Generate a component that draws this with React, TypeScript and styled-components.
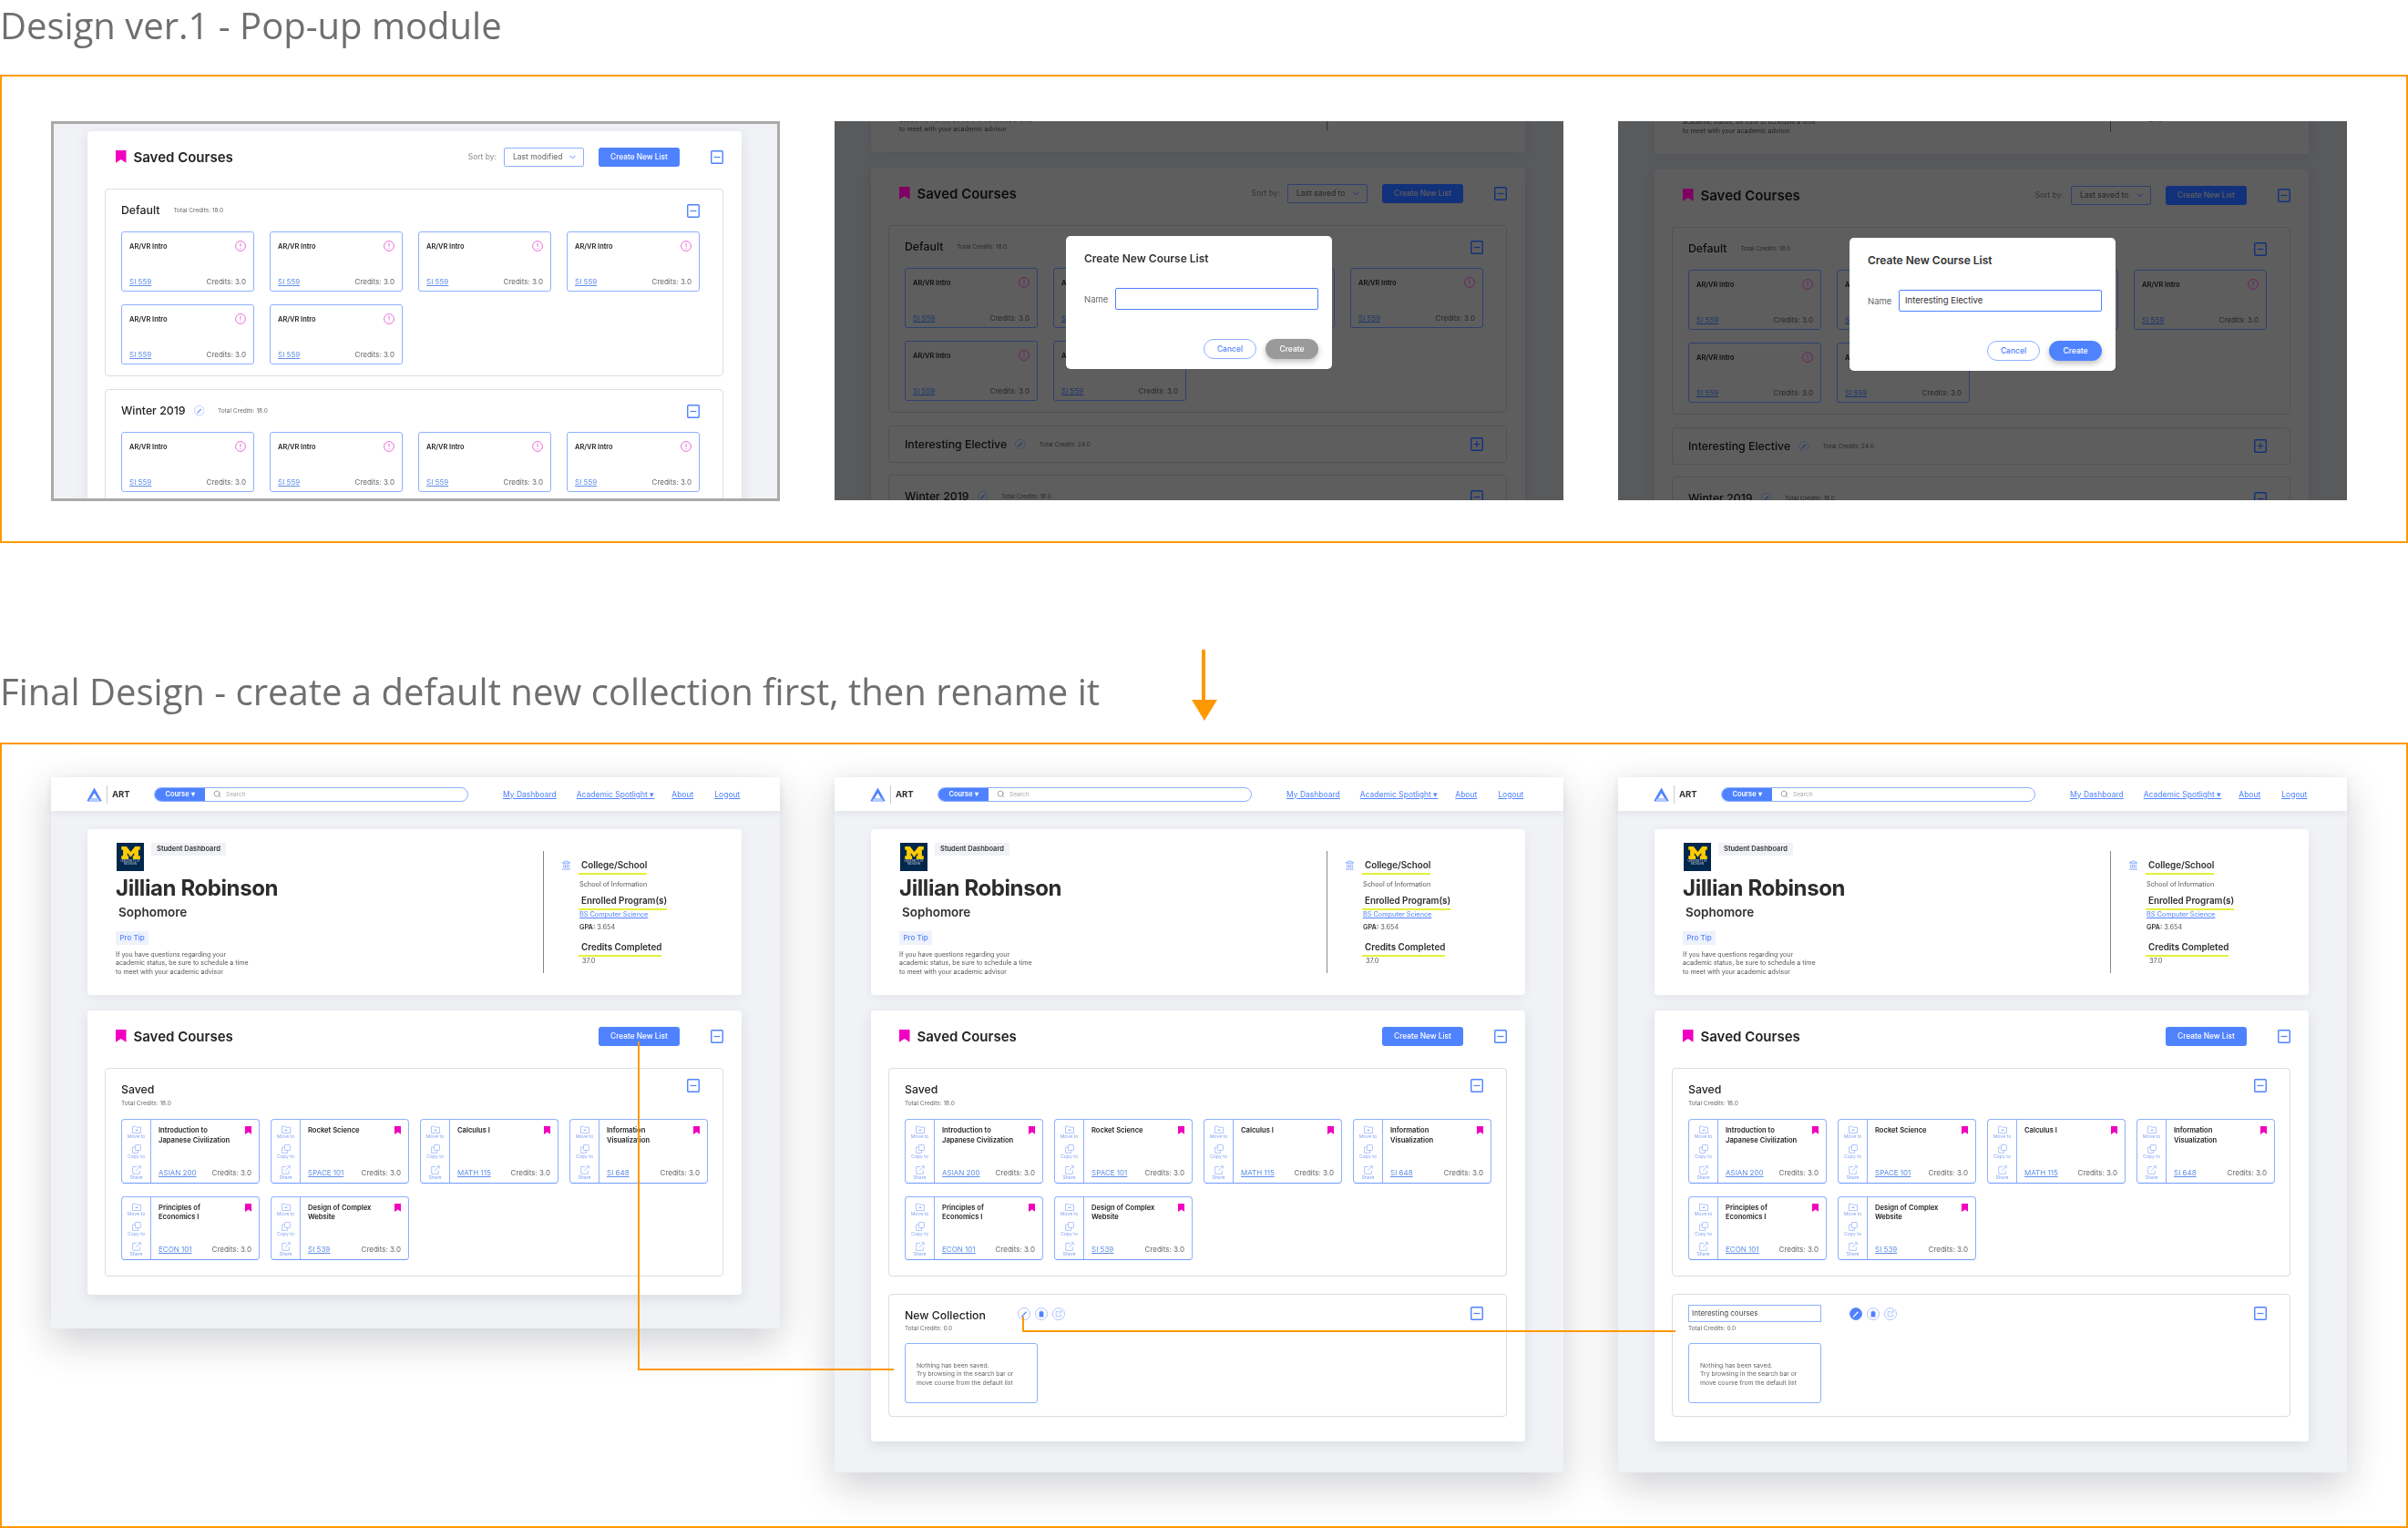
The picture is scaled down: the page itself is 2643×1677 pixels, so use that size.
import React from 'react';
import styled, { createGlobalStyle } from 'styled-components';
import { ChevronDown, Landmark, Search } from 'lucide-react';

const BLUE = '#4f82ff';
const LINE_BLUE = '#8fb0ff';
const PINK = '#f000c0';

const GlobalStyle = createGlobalStyle`
  html, body {
    margin: 0;
    padding: 0;
    background: #fff;
  }
  * {
    box-sizing: border-box;
  }
`;

// small drawn icons
const Bookmark = ({ size = 12 }: { size?: number }) => (
  <svg width={size} height={size * 1.2} viewBox="0 0 10 12">
    <path d="M0 0H10V12L5 8.8L0 12Z" fill={PINK} />
  </svg>
);

const FolderIcon = () => (
  <svg width="10" height="9" viewBox="0 0 10 9" fill="none" stroke="#9db8ff" strokeWidth="0.8">
    <path d="M.5 1.2H3.6L4.6 2.2H9.5V8.5H.5Z" />
    <path d="M3.6 5.3H6.4" stroke={BLUE} />
  </svg>
);

const CopyIcon = () => (
  <svg width="10" height="10" viewBox="0 0 10 10" fill="none" stroke="#9db8ff" strokeWidth="0.8">
    <rect x="3.4" y=".5" width="6" height="6" rx=".6" />
    <path d="M3.4 3H.6V9.4H6.6V6.5" />
  </svg>
);

const ShareIcon = () => (
  <svg width="10" height="10" viewBox="0 0 10 10" fill="none" stroke="#9db8ff" strokeWidth="0.8">
    <path d="M5 1.5H.7V9.3H8.3V5.5" />
    <path d="M4.2 5.8L9 1M6.4.7H9.3V3.6" />
  </svg>
);

const InfoIcon = () => (
  <svg width="12" height="12" viewBox="0 0 12 12" fill="none" stroke="#e85fd4" strokeWidth="0.9">
    <circle cx="6" cy="6" r="5.4" />
    <path d="M6 2.8V6.8M6 8.2V9.2" />
  </svg>
);

const PencilMark = ({ color }: { color: string }) => (
  <path d="M4.4 9.6L9 4.6L9.6 5.2L5 10.2L4.2 10.4Z" fill={color} stroke={color} strokeWidth="0.5" />
);

const EditCircle = ({ filled = false, size = 14 }: { filled?: boolean; size?: number }) => (
  <svg width={size} height={size} viewBox="0 0 14 14">
    <circle cx="7" cy="7" r="6.5" fill={filled ? BLUE : '#fff'} stroke={filled ? BLUE : '#9db8ff'} strokeWidth="0.8" />
    <PencilMark color={filled ? '#fff' : BLUE} />
  </svg>
);

const TrashCircle = () => (
  <svg width="14" height="14" viewBox="0 0 14 14">
    <circle cx="7" cy="7" r="6.5" fill="#fff" stroke="#9db8ff" strokeWidth="0.8" />
    <path d="M4.6 4.6H9.4V10.4H4.6Z" fill={BLUE} />
    <path d="M5.8 3.6H8.2V4.6H5.8Z" fill={BLUE} />
  </svg>
);

const ShareCircle = () => (
  <svg width="14" height="14" viewBox="0 0 14 14" fill="none" stroke="#9db8ff" strokeWidth="0.8">
    <circle cx="7" cy="7" r="6.5" />
    <path d="M7 4.4H4.2V9.8H9.6V7.4M6.8 7.2L10 4M8.2 3.8H10.2V5.8" />
  </svg>
);

const ArtLogo = () => (
  <svg width="17" height="16" viewBox="0 0 17 16">
    <path d="M8.5 .5L16.2 14.2Q16.4 15.6 15 15.6H2Q.6 15.6 .8 14.2Z" fill={BLUE} />
    <path d="M8.5 6.2L12.4 12.6H4.6Z" fill="#fff" />
    <path d="M3.6 12.6H13.4L14.6 15.6H2.4Z" fill="#b9ccff" />
  </svg>
);

const Michigan = () => (
  <MichiganBox>
    <svg width="21" height="14" viewBox="0 0 22 15">
      <path
        d="M0 0H6L11 6.5L16 0H22V4H20V11H22V15H13.5V11H15V7.5L11 12.5L7 7.5V11H8.5V15H0V11H2V4H0Z"
        fill="#ffcb05"
      />
    </svg>
    <MichiganText>
      UNIVERSITY OF
      <br />
      MICHIGAN
    </MichiganText>
  </MichiganBox>
);

const MinusBox = ({ plus = false }: { plus?: boolean }) => (
  <svg width="14" height="15" viewBox="0 0 14 15" fill="none">
    <rect x=".75" y=".75" width="12.5" height="13.5" rx="1" fill="#fff" stroke={BLUE} strokeWidth="1.4" />
    <path d={plus ? 'M3.5 7.5H10.5M7 4V11' : 'M3.5 7.5H10.5'} stroke={BLUE} strokeWidth="1.2" />
  </svg>
);

const savedCourses = [
  { title: 'Introduction to\nJapanese Civilization', code: 'ASIAN 200' },
  { title: 'Rocket Science', code: 'SPACE 101' },
  { title: 'Calculus I', code: 'MATH 115' },
  { title: 'Information\nVisualization', code: 'SI 648' },
  { title: 'Principles of\nEconomics I', code: 'ECON 101' },
  { title: 'Design of Complex\nWebsite', code: 'SI 539' },
];

const OldCard = () => (
  <OldCourse>
    <OldTop>
      <OldTitle>AR/VR Intro</OldTitle>
      <InfoIcon />
    </OldTop>
    <CourseFooter>
      <CourseCode>SI 559</CourseCode>
      <Credits>Credits: 3.0</Credits>
    </CourseFooter>
  </OldCourse>
);

const SavedHeader = ({ sort }: { sort?: string }) => (
  <Header>
    <HeaderTitle>
      <Bookmark size={11.5} />
      <span>Saved Courses</span>
    </HeaderTitle>
    <HeaderActions>
      {sort && (
        <>
          <SortLabel>Sort by:</SortLabel>
          <SortSelect>
            {sort}
            <ChevronDown size={11} color={BLUE} />
          </SortSelect>
        </>
      )}
      <CreateButton>Create New List</CreateButton>
    </HeaderActions>
    <MinusBox />
  </Header>
);

const OldListHead = ({
  name,
  credits,
  edit = false,
  plus = false,
  height = 46,
}: {
  name: string;
  credits: string;
  edit?: boolean;
  plus?: boolean;
  height?: number;
}) => (
  <OldHead $height={height}>
    <ListName>{name}</ListName>
    {edit && <EditCircle size={11.5} />}
    <OldTotal>Total Credits: {credits}</OldTotal>
    <HeadEnd>
      <MinusBox plus={plus} />
    </HeadEnd>
  </OldHead>
);

const OldDefaultList = ({ count = 6 }: { count?: number }) => (
  <OldList>
    <OldListHead name="Default" credits="18.0" />
    <OldGrid>
      {Array.from({ length: count }).map((_, i) => (
        <OldCard key={i} />
      ))}
    </OldGrid>
  </OldList>
);

const StudentCard = ({ $offset }: { $offset?: number }) => (
  <Student $offset={$offset}>
    <StudentLeft>
      <BadgeRow>
        <Michigan />
        <DashboardTag>Student Dashboard</DashboardTag>
      </BadgeRow>
      <StudentName>Jillian Robinson</StudentName>
      <StudentYear>Sophomore</StudentYear>
      <ProTip>Pro Tip</ProTip>
      <TipText>
        If you have questions regarding your
        <br />
        academic status, be sure to schedule a time
        <br />
        to meet with your academic advisor
      </TipText>
    </StudentLeft>
    <Facts>
      <FactHeadRow>
        <TempleSlot>
          <Landmark size={11} color={BLUE} strokeWidth={1.5} />
        </TempleSlot>
        <FactHead>College/School</FactHead>
      </FactHeadRow>
      <FactText $top={6}>School of Information</FactText>
      <FactHeadRow $top={7}>
        <FactHead>Enrolled Program(s)</FactHead>
      </FactHeadRow>
      <FactLink>BS Computer Science</FactLink>
      <FactText $top={4}>
        <b>GPA:</b> 3.654
      </FactText>
      <FactHeadRow $top={11}>
        <FactHead>Credits Completed</FactHead>
      </FactHeadRow>
      <FactText $indent={3}>37.0</FactText>
    </Facts>
  </Student>
);

const SavedList = () => (
  <NewList $height={229}>
    <NewHead>
      <div>
        <ListName>Saved</ListName>
        <NewTotal>Total Credits: 18.0</NewTotal>
      </div>
      <MinusBox />
    </NewHead>
    <NewGrid>
      {savedCourses.map((course) => (
        <NewCourse key={course.code}>
          <ToolColumn>
            <ToolItem>
              <FolderIcon />
              Move to
            </ToolItem>
            <ToolItem>
              <CopyIcon />
              Copy to
            </ToolItem>
            <ToolItem>
              <ShareIcon />
              Share
            </ToolItem>
          </ToolColumn>
          <NewBody>
            <NewTop>
              <NewTitle>{course.title}</NewTitle>
              <Bookmark size={7.5} />
            </NewTop>
            <CourseFooter>
              <CourseCode>{course.code}</CourseCode>
              <Credits>Credits: 3.0</Credits>
            </CourseFooter>
          </NewBody>
        </NewCourse>
      ))}
    </NewGrid>
  </NewList>
);

const CollectionList = ({ editing = false }: { editing?: boolean }) => (
  <NewList $height={135} $top={19}>
    <CollectionHead>
      <CollectionName $width={editing ? 177 : 124}>
        {editing ? <RenameInput>Interesting courses</RenameInput> : <ListName>New Collection</ListName>}
      </CollectionName>
      <CircleRow>
        <EditCircle filled={editing} />
        <TrashCircle />
        <ShareCircle />
      </CircleRow>
      <HeadEnd>
        <MinusBox />
      </HeadEnd>
    </CollectionHead>
    <NewTotal>Total Credits: 0.0</NewTotal>
    <EmptyBox>
      Nothing has been saved.
      <br />
      Try browsing in the search bar or
      <br />
      move course from the default list
    </EmptyBox>
  </NewList>
);

const FinalPanel = ({ tall = false, editing = false }: { tall?: boolean; editing?: boolean }) => (
  <Panel $height={tall ? 763 : 605} $shadow>
    <Nav>
      <ArtLogo />
      <NavDivider />
      <NavBrand>ART</NavBrand>
      <SearchBar>
        <CoursePill>Course ▾</CoursePill>
        <Search size={9} color="#888" />
        <SearchHint>Search</SearchHint>
      </SearchBar>
      <NavLinks>
        <NavLink $gap={22}>My Dashboard</NavLink>
        <NavLink $gap={19}>Academic Spotlight ▾</NavLink>
        <NavLink $gap={23}>About</NavLink>
        <NavLink>Logout</NavLink>
      </NavLinks>
    </Nav>
    <StudentCard $offset={20} />
    <SavedCard $bottom={tall ? 27 : 20}>
      <SavedHeader />
      <SavedList />
      {tall && <CollectionList editing={editing} />}
    </SavedCard>
  </Panel>
);

const DimmedPanel = ({ filled = false }: { filled?: boolean }) => (
  <Panel $height={416}>
    <StudentCard $offset={filled ? -146 : -148} />
    <SavedCard>
      <SavedHeader sort="Last saved to" />
      <OldDefaultList />
      <OldList $top={14}>
        <OldListHead name="Interesting Elective" credits="24.0" edit plus height={39} />
      </OldList>
      <OldList $top={13}>
        <OldListHead name="Winter 2019" credits="18.0" edit />
      </OldList>
    </SavedCard>
    <Overlay $shift={filled ? 14 : 18}>
      <Modal>
        <ModalTitle>Create New Course List</ModalTitle>
        <NameRow>
          <NameLabel>Name</NameLabel>
          <NameInput>{filled ? 'Interesting Elective' : ''}</NameInput>
        </NameRow>
        <ModalButtons>
          <CancelButton>Cancel</CancelButton>
          <ConfirmButton $ready={filled}>Create</ConfirmButton>
        </ModalButtons>
      </Modal>
    </Overlay>
  </Panel>
);

export default function App() {
  return (
    <Page>
      <GlobalStyle />
      <TopHeading>Design ver.1 - Pop-up module</TopHeading>
      <Frame $height={514} $top={49}>
        <Panel $height={417} $framed>
          <SavedCard $top={11}>
            <SavedHeader sort="Last modified" />
            <OldDefaultList />
            <OldList $top={14}>
              <OldListHead name="Winter 2019" credits="18.0" edit />
              <OldGrid>
                {[0, 1, 2, 3].map((i) => (
                  <OldCard key={i} />
                ))}
              </OldGrid>
            </OldList>
          </SavedCard>
        </Panel>
        <DimmedPanel />
        <DimmedPanel filled />
      </Frame>
      <MiddleRow>
        <FinalHeading>Final Design - create a default new collection first, then rename it</FinalHeading>
        <DownArrow viewBox="0 0 28 78">
          <path d="M11 0H15V55H28L14 78L0 55H11Z" fill="#ff9800" />
        </DownArrow>
      </MiddleRow>
      <Frame $height={862} $top={36}>
        <FinalPanel />
        <FinalPanel tall />
        <FinalPanel tall editing />
      </Frame>
      <Connectors viewBox="0 0 2643 1677">
        <polyline points="701,1143 701,1503 981,1503" />
        <polyline points="1123,1445 1123,1461 1839,1461" />
      </Connectors>
    </Page>
  );
}

const Page = styled.div`
  position: relative;
  width: 2643px;
  height: 1677px;
  overflow: hidden;
  font-family: Inter, 'Liberation Sans', sans-serif;
  color: #222;
`;

const TopHeading = styled.h1`
  margin: 0;
  height: 82px;
  padding-top: 2px;
  font-family: 'Open Sans', sans-serif;
  font-weight: 400;
  font-size: 40px;
  line-height: 52px;
  color: #6f6f6f;
`;

const Frame = styled.section<{ $height: number; $top: number }>`
  display: flex;
  gap: 60px;
  align-items: flex-start;
  height: ${(p) => p.$height}px;
  padding: ${(p) => p.$top}px 0 0 54px;
  border: 2px solid #ff9800;
`;

const MiddleRow = styled.div`
  display: grid;
  grid-template-columns: 1308px 28px;
  height: 219px;
`;

const FinalHeading = styled.h2`
  margin: 135px 0 0;
  font-family: 'Open Sans', sans-serif;
  font-weight: 400;
  font-size: 40px;
  line-height: 56px;
  color: #6f6f6f;
  white-space: nowrap;
`;

const DownArrow = styled.svg`
  margin-top: 117px;
  width: 28px;
  height: 78px;
`;

const Connectors = styled.svg`
  position: absolute;
  left: 0;
  top: 0;
  width: 2643px;
  height: 1677px;
  pointer-events: none;
  polyline {
    fill: none;
    stroke: #ff9800;
    stroke-width: 2;
  }
`;

const Panel = styled.div<{ $height: number; $framed?: boolean; $shadow?: boolean }>`
  position: relative;
  flex: none;
  width: 800px;
  height: ${(p) => p.$height}px;
  background: #f0f2f6;
  overflow: ${(p) => (p.$shadow ? 'visible' : 'hidden')};
  box-shadow: ${(p) => (p.$shadow ? '0 14px 40px rgba(30, 35, 50, 0.22)' : 'none')};
  outline: ${(p) => (p.$framed ? '3px solid #aaaaaa' : 'none')};
  outline-offset: -3px;
`;

const Overlay = styled.div<{ $shift: number }>`
  position: absolute;
  inset: 0;
  display: flex;
  align-items: center;
  justify-content: center;
  padding-bottom: ${(p) => p.$shift}px;
  backdrop-filter: brightness(0.37) saturate(1.6);
`;

const Modal = styled.div`
  width: 292px;
  height: 146px;
  padding: 18px 15px 0 20px;
  background: #fff;
  border-radius: 5px;
`;

const ModalTitle = styled.div`
  font-size: 12px;
  line-height: 14px;
  font-weight: 600;
  color: #333;
`;

const NameRow = styled.div`
  display: flex;
  align-items: center;
  margin-top: 25px;
`;

const NameLabel = styled.span`
  width: 34px;
  font-size: 9.5px;
  color: #666;
`;

const NameInput = styled.div`
  flex: 1;
  height: 24px;
  padding-left: 6px;
  border: 1px solid ${BLUE};
  border-radius: 2px;
  font-size: 9.5px;
  line-height: 22px;
  color: #333;
`;

const ModalButtons = styled.div`
  display: flex;
  justify-content: flex-end;
  gap: 10px;
  margin-top: 32px;
`;

const CancelButton = styled.div`
  width: 58px;
  height: 22px;
  border: 1px solid ${LINE_BLUE};
  border-radius: 11px;
  text-align: center;
  font-size: 8.5px;
  line-height: 20px;
  font-weight: 500;
  color: ${BLUE};
`;

const ConfirmButton = styled.div<{ $ready?: boolean }>`
  width: 58px;
  height: 22px;
  border-radius: 11px;
  background: ${(p) => (p.$ready ? BLUE : '#9a9a9a')};
  box-shadow: 0 3px 6px rgba(0, 0, 0, 0.25);
  text-align: center;
  font-size: 8.5px;
  line-height: 22px;
  font-weight: 500;
  color: #fff;
`;

const Nav = styled.nav`
  display: flex;
  align-items: center;
  height: 37px;
  padding-left: 39px;
  background: #fff;
  box-shadow: 0 2px 8px rgba(30, 35, 50, 0.08);
`;

const NavDivider = styled.span`
  width: 1px;
  height: 20px;
  margin: 0 5px 0 5px;
  background: #ccc;
`;

const NavBrand = styled.span`
  width: 46px;
  font-size: 9.5px;
  font-weight: 700;
  color: #333;
`;

const SearchBar = styled.div`
  display: flex;
  align-items: center;
  width: 345px;
  height: 16px;
  border: 1px solid ${LINE_BLUE};
  border-radius: 8px;
  overflow: hidden;
`;

const CoursePill = styled.span`
  width: 55px;
  height: 100%;
  margin-right: 9px;
  background: ${BLUE};
  text-align: center;
  font-size: 7.5px;
  line-height: 14px;
  font-weight: 600;
  color: #fff;
`;

const SearchHint = styled.span`
  margin-left: 5px;
  font-size: 6.5px;
  color: #aaa;
`;

const NavLinks = styled.div`
  display: flex;
  margin-left: 38px;
`;

const NavLink = styled.span<{ $gap?: number }>`
  margin-right: ${(p) => p.$gap ?? 0}px;
  font-size: 8.5px;
  color: ${BLUE};
  text-decoration: underline;
  white-space: nowrap;
`;

const Student = styled.div<{ $offset?: number }>`
  display: flex;
  width: 718px;
  height: 182px;
  margin: ${(p) => p.$offset ?? 0}px 0 17px 40px;
  background: #fff;
  border-radius: 4px;
  box-shadow: 0 3px 12px rgba(30, 35, 50, 0.06);
`;

const StudentLeft = styled.div`
  width: 500px;
  padding: 15px 0 0 31px;
`;

const BadgeRow = styled.div`
  display: flex;
  align-items: flex-start;
  gap: 8px;
`;

const MichiganBox = styled.div`
  display: flex;
  flex-direction: column;
  align-items: center;
  width: 30px;
  height: 31px;
  margin-left: 1px;
  padding-top: 4px;
  background: #00274c;
`;

const MichiganText = styled.div`
  margin-top: 1px;
  font-size: 2.8px;
  line-height: 3.2px;
  text-align: center;
  color: #cfd8e3;
  white-space: nowrap;
`;

const DashboardTag = styled.span`
  height: 14px;
  padding: 0 6px;
  background: #f0f2f6;
  font-size: 7.5px;
  line-height: 14px;
  font-weight: 600;
  color: #333;
  white-space: nowrap;
`;

const StudentName = styled.div`
  margin-top: 5px;
  font-size: 24px;
  line-height: 28px;
  font-weight: 700;
  letter-spacing: -0.4px;
  color: #2c2c2c;
`;

const StudentYear = styled.div`
  margin: 3px 0 0 3px;
  font-size: 13.5px;
  line-height: 18px;
  font-weight: 600;
  color: #333;
`;

const ProTip = styled.div`
  width: 36px;
  height: 15px;
  margin-top: 12px;
  background: #eef2fb;
  text-align: center;
  font-size: 8px;
  line-height: 15px;
  font-weight: 500;
  color: ${BLUE};
`;

const TipText = styled.div`
  margin-top: 6px;
  font-size: 7px;
  line-height: 9.4px;
  color: #555;
  white-space: nowrap;
`;

const Facts = styled.div`
  height: 134px;
  margin-top: 24px;
  padding: 10px 0 0 38px;
  border-left: 1px solid #888;
`;

const FactHeadRow = styled.div<{ $top?: number }>`
  display: flex;
  align-items: flex-start;
  margin-top: ${(p) => p.$top ?? 0}px;
`;

const TempleSlot = styled.span`
  width: 19px;
  margin-left: -19px;
  line-height: 10px;
`;

const FactHead = styled.span`
  padding: 0 0 2px 3px;
  border-bottom: 2px solid #e4f03c;
  font-size: 9.8px;
  line-height: 12px;
  font-weight: 600;
  color: #2c2c2c;
  white-space: nowrap;
`;

const FactText = styled.div<{ $top?: number; $indent?: number }>`
  margin: ${(p) => p.$top ?? 0}px 0 0 ${(p) => 1 + (p.$indent ?? 0)}px;
  font-size: 7.3px;
  line-height: 10px;
  color: #555;
  b {
    font-weight: 600;
    color: #333;
  }
`;

const FactLink = styled.div`
  margin: 0 0 0 1px;
  font-size: 7.3px;
  line-height: 10px;
  color: ${BLUE};
  text-decoration: underline;
`;

const SavedCard = styled.div<{ $top?: number; $bottom?: number }>`
  width: 718px;
  margin: ${(p) => p.$top ?? 0}px 0 0 40px;
  padding: 0 20px ${(p) => p.$bottom ?? 20}px 19px;
  background: #fff;
  border-radius: 4px;
  box-shadow: 0 4px 14px rgba(30, 35, 50, 0.1);
`;

const Header = styled.div`
  display: flex;
  align-items: center;
  height: 63px;
  padding: 0 0 7px 12px;
`;

const HeaderTitle = styled.div`
  display: flex;
  align-items: center;
  gap: 8px;
  font-size: 15px;
  font-weight: 600;
  color: #222;
`;

const HeaderActions = styled.div`
  display: flex;
  align-items: center;
  margin: 0 34px 0 auto;
`;

const SortLabel = styled.span`
  margin-right: 8px;
  font-size: 8.5px;
  color: #888;
`;

const SortSelect = styled.div`
  display: flex;
  align-items: center;
  justify-content: space-between;
  width: 88px;
  height: 21px;
  margin-right: 16px;
  padding: 0 6px 0 9px;
  border: 1px solid ${LINE_BLUE};
  border-radius: 2px;
  font-size: 8.5px;
  color: #666;
`;

const CreateButton = styled.div`
  width: 89px;
  height: 21px;
  background: ${BLUE};
  border-radius: 3px;
  text-align: center;
  font-size: 8.3px;
  line-height: 21px;
  font-weight: 500;
  color: #fff;
`;

const OldList = styled.div<{ $top?: number }>`
  margin-top: ${(p) => p.$top ?? 0}px;
  padding: 0 25px 12px 17px;
  border: 1px solid #dcdde0;
  border-radius: 4px;
  background: #fff;
  &:has(> :only-child) {
    padding-bottom: 0;
  }
`;

const OldHead = styled.div<{ $height: number }>`
  display: flex;
  align-items: center;
  gap: 9px;
  height: ${(p) => p.$height}px;
`;

const ListName = styled.span`
  font-size: 12.3px;
  line-height: 16px;
  font-weight: 500;
  color: #222;
  white-space: nowrap;
`;

const OldTotal = styled.span`
  margin-left: 6px;
  font-size: 6.5px;
  color: #666;
`;

const HeadEnd = styled.span`
  margin-left: auto;
  line-height: 0;
`;

const OldGrid = styled.div`
  display: grid;
  grid-template-columns: repeat(4, 146px);
  grid-auto-rows: 66px;
  gap: 14px 17px;
`;

const OldCourse = styled.div`
  display: flex;
  flex-direction: column;
  justify-content: space-between;
  padding: 9px 8px 5px;
  background: #fff;
  border: 1px solid ${LINE_BLUE};
  border-radius: 3px;
`;

const OldTop = styled.div`
  display: flex;
  justify-content: space-between;
`;

const OldTitle = styled.span`
  font-size: 7.4px;
  line-height: 14px;
  font-weight: 600;
  color: #222;
`;

const CourseFooter = styled.div`
  display: flex;
  justify-content: space-between;
  align-items: baseline;
  line-height: 10px;
`;

const CourseCode = styled.span`
  font-size: 8px;
  color: #5f8ee8;
  text-decoration: underline;
`;

const Credits = styled.span`
  font-size: 8px;
  color: #666;
`;

const NewList = styled.div<{ $height: number; $top?: number }>`
  height: ${(p) => p.$height}px;
  margin-top: ${(p) => p.$top ?? 0}px;
  padding: 11px 0 0 17px;
  border: 1px solid #dcdde0;
  border-radius: 4px;
`;

const NewHead = styled.div`
  display: flex;
  align-items: flex-start;
  justify-content: space-between;
  height: 44px;
  padding-right: 25px;
`;

const NewTotal = styled.div`
  margin-top: 3px;
  font-size: 6.5px;
  line-height: 9px;
  color: #666;
`;

const NewGrid = styled.div`
  display: grid;
  grid-template-columns: repeat(4, 152px);
  grid-auto-rows: 70.5px;
  gap: 14px 12px;
`;

const NewCourse = styled.div`
  display: flex;
  background: #fff;
  border: 1px solid ${LINE_BLUE};
  border-bottom-color: #6f9aff;
  border-radius: 4px;
`;

const ToolColumn = styled.div`
  display: flex;
  flex: none;
  flex-direction: column;
  justify-content: space-between;
  width: 32px;
  padding: 6px 0 3px;
  border-right: 1px solid ${LINE_BLUE};
`;

const ToolItem = styled.div`
  display: flex;
  flex-direction: column;
  align-items: center;
  font-size: 5.2px;
  line-height: 6px;
  color: #86a6f5;
`;

const NewBody = styled.div`
  display: flex;
  flex: 1;
  flex-direction: column;
  justify-content: space-between;
  padding: 7px 8px 6px 8px;
`;

const NewTop = styled.div`
  display: flex;
  justify-content: space-between;
`;

const NewTitle = styled.span`
  font-size: 7.6px;
  line-height: 10.6px;
  font-weight: 600;
  color: #222;
  white-space: pre-line;
`;

const CollectionHead = styled.div`
  display: flex;
  align-items: center;
  height: 19px;
  padding-right: 25px;
`;

const CollectionName = styled.div<{ $width: number }>`
  width: ${(p) => p.$width}px;
`;

const RenameInput = styled.div`
  width: 146px;
  height: 19px;
  padding-left: 3px;
  border: 1px solid ${LINE_BLUE};
  font-size: 8px;
  line-height: 17px;
  color: #444;
`;

const CircleRow = styled.div`
  display: flex;
  gap: 5px;
  line-height: 0;
`;

const EmptyBox = styled.div`
  width: 146px;
  height: 66px;
  margin-top: 11px;
  padding: 19px 0 0 12px;
  border: 1px solid ${LINE_BLUE};
  border-radius: 3px;
  font-size: 6.8px;
  line-height: 9.4px;
  color: #666;
  white-space: nowrap;
`;
